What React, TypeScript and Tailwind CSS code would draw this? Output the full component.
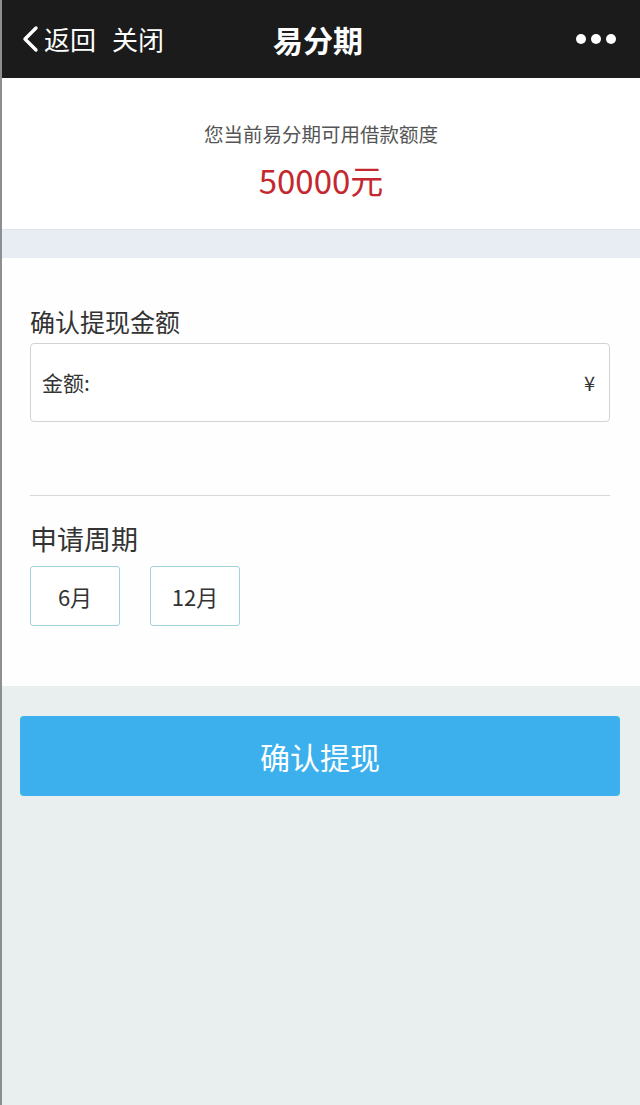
import { useState } from 'react'

const FONT = '"Noto Sans CJK SC", "Liberation Sans", sans-serif'

const TERMS = ['6月', '12月']

function NavBar() {
  return (
    <div className="flex h-[78px] items-center bg-[#1b1b1b] pl-[18px] pr-[24px] text-white">
      <div className="flex w-[200px] items-center">
        <svg width="20" height="30" viewBox="0 0 20 30" className="mr-[4px]">
          <path d="M16 4 L5 15 L16 26" fill="none" stroke="#fff" strokeWidth="3.4" strokeLinecap="round" strokeLinejoin="round" />
        </svg>
        <span className="text-[26px] leading-none">返回</span>
        <span className="ml-[16px] text-[26px] leading-none">关闭</span>
      </div>
      <div className="flex-1 text-center text-[30px] font-bold leading-none">易分期</div>
      <div className="flex w-[200px] items-center justify-end gap-[5px]">
        <span className="h-[10px] w-[10px] rounded-full bg-white" />
        <span className="h-[10px] w-[10px] rounded-full bg-white" />
        <span className="h-[10px] w-[10px] rounded-full bg-white" />
      </div>
    </div>
  )
}

export default function App() {
  const [term, setTerm] = useState<string | null>(null)

  return (
    <div className="min-h-[1105px] border-l-2 border-[#8a8f92] bg-[#e9efef]" style={{ fontFamily: FONT }}>
      <NavBar />

      {/* available credit */}
      <div className="flex h-[151px] flex-col items-center bg-white pt-[42px]">
        <p className="text-[19.5px] leading-[27px] text-[#555]">您当前易分期可用借款额度</p>
        <p className="mt-[14px] text-[33px] leading-[38px] text-[#c4282e]">50000元</p>
      </div>

      <div className="h-[29px] border-t border-[#dfe5ea] bg-[#e8edf3]" />

      {/* form */}
      <div className="bg-[#fefefe] pb-[60px] pl-[28px] pr-[30px] pt-[47px]">
        <h3 className="text-[25px] leading-[32px] text-[#333]">确认提现金额</h3>
        <div className="mt-[6px] flex h-[79px] items-center justify-between rounded-[4px] border border-[#cfd3d6] bg-white pl-[11px] pr-[14px]">
          <span className="text-[21px] text-[#333]">金额:</span>
          <span className="text-[20px] text-[#333]">¥</span>
        </div>

        <div className="mt-[73px] h-px bg-[#d6d9dc]" />

        <h3 className="mt-[27px] text-[27px] leading-[32px] text-[#333]">申请周期</h3>
        <div className="mt-[11px] flex gap-[30px]">
          {TERMS.map(t => (
            <button
              key={t}
              onClick={() => setTerm(t)}
              className={`flex h-[60px] w-[90px] items-center justify-center rounded-[3px] border text-[22px] text-[#333] ${
                term === t ? 'border-[#3cb0ed] bg-[#eef8fe]' : 'border-[#9fd3da] bg-white'
              }`}
            >
              {t}
            </button>
          ))}
        </div>
      </div>

      <div className="pl-[18px] pr-[20px] pt-[30px]">
        <button className="flex h-[80px] w-full items-center justify-center rounded-[4px] bg-[#3cb0ed] text-[30px] text-white">
          确认提现
        </button>
      </div>
    </div>
  )
}
